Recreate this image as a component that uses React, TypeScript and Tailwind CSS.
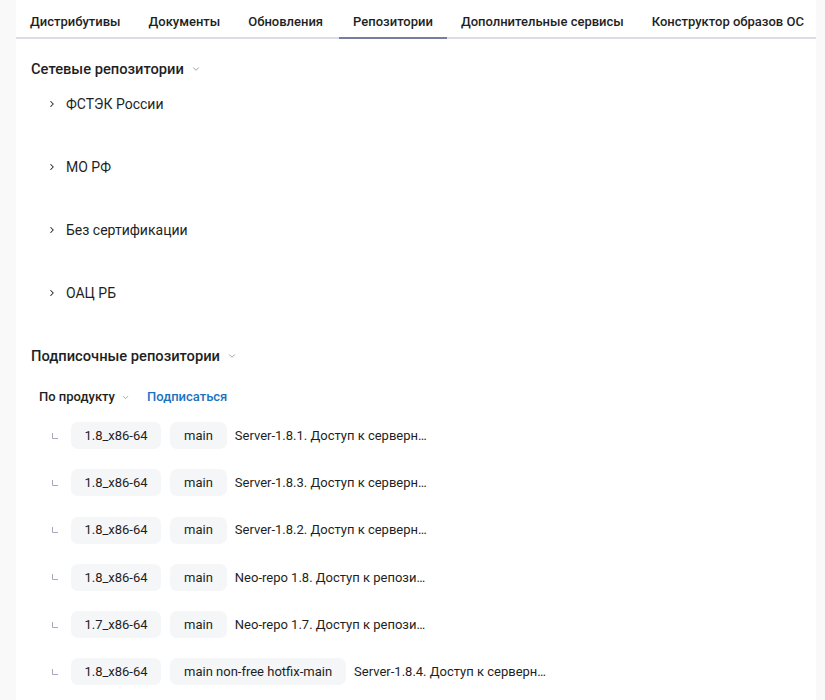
import { ChevronDown, ChevronRight } from "lucide-react"

const tabs = [
  "Дистрибутивы",
  "Документы",
  "Обновления",
  "Репозитории",
  "Дополнительные сервисы",
  "Конструктор образов ОС",
]

const networkRepos = ["ФСТЭК России", "МО РФ", "Без сертификации", "ОАЦ РБ"]

const subscriptionRepos = [
  { arch: "1.8_x86-64", components: "main", title: "Server-1.8.1. Доступ к серверн…" },
  { arch: "1.8_x86-64", components: "main", title: "Server-1.8.3. Доступ к серверн…" },
  { arch: "1.8_x86-64", components: "main", title: "Server-1.8.2. Доступ к серверн…" },
  { arch: "1.8_x86-64", components: "main", title: "Neo-repo 1.8. Доступ к репози…" },
  { arch: "1.7_x86-64", components: "main", title: "Neo-repo 1.7. Доступ к репози…" },
  { arch: "1.8_x86-64", components: "main non-free hotfix-main", title: "Server-1.8.4. Доступ к серверн…" },
]

function CornerIcon() {
  return (
    <svg width="6" height="6" viewBox="0 0 6 6" className="text-[#a6a9bb]">
      <path d="M0.5 0 V5.5 H6" fill="none" stroke="currentColor" strokeWidth="1" />
    </svg>
  )
}

export default function App() {
  return (
    <div
      className="flex min-h-[700px] bg-[#f9f9f9] text-[#1e1f24]"
      style={{ fontFamily: "Roboto, 'Noto Sans', sans-serif" }}
    >
      <div className="ml-[16px] w-[800px] bg-white">
        <nav className="flex border-b-2 border-[#dcdce6]">
          {tabs.map((tab) => (
            <button
              key={tab}
              className={
                tab === "Репозитории"
                  ? "-mb-[2px] ml-[2px] whitespace-nowrap border-b-2 border-[#7b7d9e] px-[14px] pt-[14px] pb-[7px] text-[13px] leading-[16px] font-medium"
                  : "whitespace-nowrap px-[14px] pt-[14px] pb-[7px] text-[13px] leading-[16px] font-medium"
              }
            >
              {tab}
            </button>
          ))}
        </nav>

        <div className="px-[15px] pt-[20px]">
          <div className="flex h-[20px] items-center gap-[7px] text-[14.7px] font-medium">
            Сетевые репозитории
            <ChevronDown className="h-[10px] w-[10px] text-[#8a8c9c]" strokeWidth={2} />
          </div>

          <ul className="mt-[15px] pl-[16px]">
            {networkRepos.map((name) => (
              <li key={name} className="flex h-[63px] items-start">
                <div className="flex h-[20px] items-center gap-[9px] text-[14px]">
                  <ChevronRight className="h-[10px] w-[10px]" strokeWidth={2.5} />
                  {name}
                </div>
              </li>
            ))}
          </ul>

          <div className="flex h-[20px] items-center gap-[7px] text-[14.7px] font-medium">
            Подписочные репозитории
            <ChevronDown className="h-[10px] w-[10px] text-[#8a8c9c]" strokeWidth={2} />
          </div>

          <div className="mt-[21px] flex h-[20px] items-center pl-[8px] text-[13px] font-medium">
            <span>По продукту</span>
            <ChevronDown className="ml-[6px] h-[9px] w-[9px] text-[#8a8c9c]" strokeWidth={2} />
            <span className="ml-[17px] text-[#1d72c0]">Подписаться</span>
          </div>

          <ul className="mt-[15px] flex flex-col gap-[20.3px] pl-[21px]">
            {subscriptionRepos.map((repo, i) => (
              <li key={i} className="flex h-[27px] items-center text-[13px]">
                <CornerIcon />
                <span className="ml-[13px] flex h-[27px] w-[90px] items-center justify-center rounded-[7px] bg-[#f5f6f8]">
                  {repo.arch}
                </span>
                <span className="ml-[9px] flex h-[27px] items-center rounded-[7px] bg-[#f5f6f8] px-[14px]">
                  {repo.components}
                </span>
                <span className="ml-[8px] whitespace-nowrap">{repo.title}</span>
              </li>
            ))}
          </ul>
        </div>
      </div>
    </div>
  )
}
